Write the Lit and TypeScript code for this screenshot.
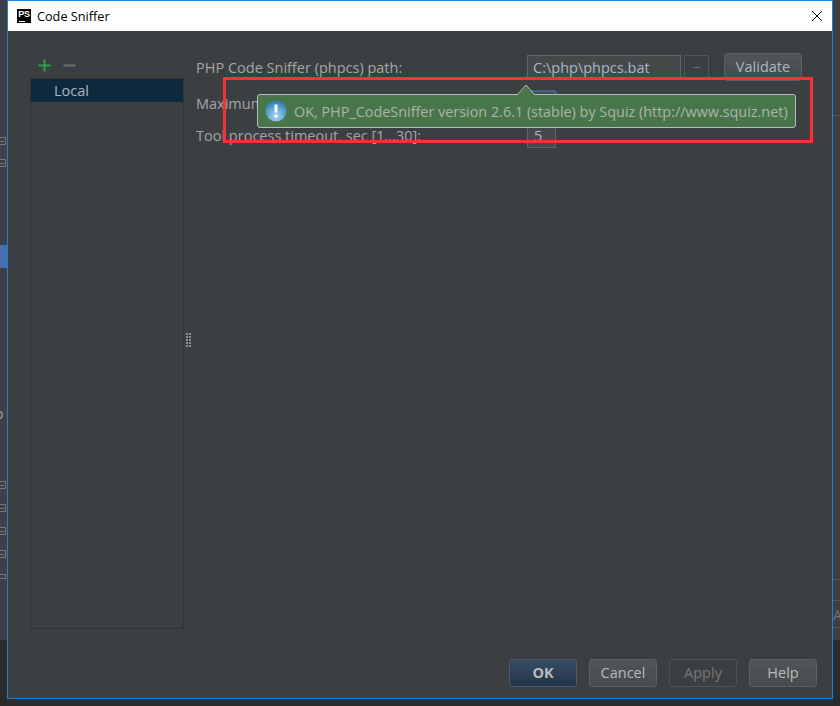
import { LitElement, html, css } from 'lit';
import { customElement } from 'lit/decorators.js';

// little file glyphs of the IDE project tree, showing behind the dialog
const TREE_ICONS = [
  { top: 137, cls: '' },
  { top: 159, cls: '' },
  { top: 481, cls: '' },
  { top: 504, cls: '' },
  { top: 527, cls: '' },
  { top: 550, cls: '' },
  { top: 574, cls: 'cut' },
];

@customElement('app-root')
export class AppRoot extends LitElement {
  static styles = css`
    :host {
      display: block;
      width: 840px;
      height: 706px;
      position: relative;
      overflow: hidden;
      background: #3c3f41;
      font-family: 'Open Sans', 'Noto Sans', sans-serif;
      font-size: 14.5px;
      color: #a9b7c6;
    }
    .ide-bottom {
      position: absolute;
      left: 0;
      right: 0;
      top: 640px;
      bottom: 0;
      background: #2b2b2b;
    }
    .ide-left-edge {
      position: absolute;
      left: 0;
      top: 0;
      width: 7px;
      height: 640px;
      background: #3d4044;
    }
    .ide-sel {
      position: absolute;
      left: 0;
      top: 245px;
      width: 7px;
      height: 23px;
      background: #4b6eaf;
    }
    .ide-letter {
      position: absolute;
      left: -5px;
      top: 404px;
      width: 12px;
      overflow: hidden;
      color: #a9a9a9;
      font-size: 14px;
      line-height: 20px;
    }
    .tree-icon {
      position: absolute;
      left: 0;
      width: 6px;
      height: 8px;
      border: 1px solid #75787a;
      border-left: 0;
      box-sizing: border-box;
    }
    .tree-icon::after {
      content: '';
      position: absolute;
      left: 0;
      right: 1px;
      top: 3px;
      height: 1px;
      background: #75787a;
    }
    .tree-icon.cut {
      height: 5px;
    }
    .ide-right {
      position: absolute;
      left: 833px;
      top: 0;
      width: 7px;
      height: 640px;
      background: #3c3f41;
    }
    .ide-right-line {
      position: absolute;
      left: 833px;
      width: 7px;
      height: 1px;
      background: #515658;
    }
    .ide-right-text {
      position: absolute;
      left: 833px;
      top: 605px;
      width: 7px;
      overflow: hidden;
      color: #6f7375;
      font-size: 14px;
      line-height: 20px;
    }
    .dialog {
      position: absolute;
      left: 7px;
      top: 0;
      width: 826px;
      height: 699px;
      box-sizing: border-box;
      border: 1px solid #1883d7;
      background: #3c3f41;
      display: flex;
      flex-direction: column;
    }
    .titlebar {
      height: 30px;
      flex: none;
      background: #fff;
      display: flex;
      align-items: center;
      padding: 0 7px 0 9px;
      color: #000;
      font-size: 12.7px;
    }
    .ps-logo {
      width: 14px;
      height: 14px;
      background: #000;
      margin-right: 6px;
      position: relative;
      flex: none;
      color: #fff;
      font: bold 9px/10px 'Liberation Sans', sans-serif;
      text-align: center;
      letter-spacing: -0.3px;
    }
    .ps-logo::after {
      content: '';
      position: absolute;
      left: 2px;
      bottom: 1px;
      width: 6px;
      height: 1px;
      background: #fff;
    }
    .title {
      flex: 1;
    }
    .close {
      width: 12px;
      height: 12px;
      display: block;
      margin-right: 2px;
    }
    .body {
      flex: 1;
      display: flex;
      padding: 22px 30px 0 22px;
      min-height: 0;
    }
    .left {
      width: 154px;
      flex: none;
      display: flex;
      flex-direction: column;
    }
    .toolbar {
      height: 25px;
      display: flex;
      align-items: center;
      gap: 12px;
      padding: 0 0 1px 8px;
      box-sizing: border-box;
      flex: none;
    }
    .toolbar svg {
      width: 13px;
      height: 13px;
      display: block;
    }
    .list {
      height: 551px;
      box-sizing: border-box;
      border: 1px solid #323232;
    }
    .item {
      height: 23px;
      line-height: 23px;
      padding-left: 23px;
      background: #0d293e;
      color: #a9b7c6;
    }
    .splitter {
      width: 12px;
      flex: none;
      display: flex;
      align-items: center;
      padding-left: 2px;
      box-sizing: border-box;
    }
    .grip {
      width: 6px;
      height: 15px;
      margin-top: -32px;
      background-image: radial-gradient(circle at 1px 1px, #8f9294 1px, transparent 1px);
      background-size: 3px 3px;
    }
    .form {
      flex: 1;
      min-width: 0;
      display: flex;
      flex-direction: column;
    }
    .row {
      display: grid;
      grid-template-columns: 331px auto;
      align-items: center;
      color: #a6a6a6;
      white-space: nowrap;
    }
    .row.path {
      height: 28px;
    }
    .row.lines {
      height: 26px;
      margin-top: 9px;
    }
    .row.timeout {
      height: 26px;
      margin-top: 6px;
    }
    .path-fields {
      display: flex;
      align-items: center;
    }
    .input {
      box-sizing: border-box;
      height: 25px;
      border: 1px solid #646464;
      background: #45494a;
      color: #a9b7c6;
      line-height: 23px;
      padding-left: 5px;
    }
    .input.wide {
      width: 154px;
    }
    .input.small {
      width: 29px;
      padding-left: 6px;
    }
    .input.focus {
      border: 1px solid #466d94;
      border-radius: 2px;
      box-shadow: 0 0 0 1px #3d6185;
    }
    .dots {
      box-sizing: border-box;
      width: 25px;
      height: 25px;
      margin-left: 3px;
      border: 1px solid #555;
      text-align: center;
      font-size: 9px;
      line-height: 18px;
      color: #bbb;
    }
    .btn {
      box-sizing: border-box;
      height: 28px;
      border: 1px solid #5e6060;
      border-radius: 3px;
      background: linear-gradient(#505557, #464a4c);
      color: #a9b7c6;
      text-align: center;
      line-height: 26px;
    }
    .validate {
      width: 78px;
      margin-left: 15px;
    }
    .footer {
      flex: none;
      height: 39px;
      display: flex;
      justify-content: flex-end;
      gap: 12px;
      padding-right: 15px;
    }
    .footer .btn {
      width: 68px;
      color: #bbb;
    }
    .footer .ok {
      background: linear-gradient(#384c67, #233448);
      border-color: #4c5a6a;
      font-weight: 700;
      color: #bbb;
    }
    .footer .off {
      background: none;
      border-color: #505254;
      color: #777;
    }
    .balloon {
      position: absolute;
      left: 257px;
      top: 94px;
      box-sizing: border-box;
      width: 539px;
      height: 34px;
      background: #49754a;
      border: 1px solid #b4bfb4;
      border-radius: 3px;
      display: flex;
      align-items: center;
      padding-left: 7px;
      gap: 7px;
      font-size: 14.4px;
      color: #a9b7a9;
      white-space: nowrap;
    }
    .balloon svg {
      width: 22px;
      height: 22px;
      flex: none;
      display: block;
    }
    .tip {
      position: absolute;
      left: 517px;
      top: 84px;
      width: 18px;
      height: 11px;
      display: block;
    }
    .mark {
      position: absolute;
      left: 223px;
      top: 77px;
      width: 590px;
      height: 66px;
      box-sizing: border-box;
      border: 3px solid #f83232;
    }
  `;

  render() {
    return html`
      <div class="ide-left-edge"></div>
      <div class="ide-sel"></div>
      <div class="ide-letter">o</div>
      ${TREE_ICONS.map(
        (i) => html`<div class="tree-icon ${i.cls}" style="top:${i.top}px"></div>`
      )}
      <div class="ide-bottom"></div>
      <div class="ide-right"></div>
      <div class="ide-right-line" style="top:115px"></div>
      <div class="ide-right-line" style="top:579px"></div>
      <div class="ide-right-line" style="top:600px"></div>
      <div class="ide-right-line" style="top:627px"></div>
      <div class="ide-right-text">Ap</div>

      <div class="dialog">
        <div class="titlebar">
          <div class="ps-logo">PS</div>
          <div class="title">Code Sniffer</div>
          <svg class="close" viewBox="0 0 12 12">
            <path d="M1 1l10 10M11 1L1 11" stroke="#000" stroke-width="1" fill="none" />
          </svg>
        </div>
        <div class="body">
          <div class="left">
            <div class="toolbar">
              <svg viewBox="0 0 13 13">
                <path d="M6.5 0.5v12M0.5 6.5h12" stroke="#2ea14a" stroke-width="2" fill="none" />
              </svg>
              <svg viewBox="0 0 13 13">
                <path d="M0.5 6.5h12" stroke="#6e7173" stroke-width="2" fill="none" />
              </svg>
            </div>
            <div class="list"><div class="item">Local</div></div>
          </div>
          <div class="splitter"><div class="grip"></div></div>
          <div class="form">
            <div class="row path">
              <span>PHP Code Sniffer (phpcs) path:</span>
              <div class="path-fields">
                <div class="input wide">C:\\php\\phpcs.bat</div>
                <div class="dots">...</div>
                <div class="btn validate">Validate</div>
              </div>
            </div>
            <div class="row lines">
              <span>Maximum</span>
              <div class="input small focus"></div>
            </div>
            <div class="row timeout">
              <span>Tool process timeout, sec [1...30]:</span>
              <div class="input small">5</div>
            </div>
          </div>
        </div>
        <div class="footer">
          <div class="btn ok">OK</div>
          <div class="btn">Cancel</div>
          <div class="btn off">Apply</div>
          <div class="btn">Help</div>
        </div>
      </div>

      <div class="balloon">
        <svg viewBox="0 0 22 22">
          <defs>
            <radialGradient id="orb" cx="50%" cy="75%" r="70%">
              <stop offset="0" stop-color="#a9d8f2" />
              <stop offset="1" stop-color="#2f7fb9" />
            </radialGradient>
          </defs>
          <circle cx="11" cy="11" r="10.5" fill="url(#orb)" />
          <path d="M11 4.5v8" stroke="#fff" stroke-width="3" fill="none" />
          <circle cx="11" cy="16" r="1.7" fill="#fff" />
        </svg>
        <span>OK, PHP_CodeSniffer version 2.6.1 (stable) by Squiz (http://www.squiz.net)</span>
      </div>
      <svg class="tip" viewBox="0 0 18 11">
        <path d="M0 11L9 1l9 10z" fill="#49754a" />
        <path d="M0 11L9 1l9 10" fill="none" stroke="#b4bfb4" />
      </svg>
      <div class="mark"></div>
    `;
  }
}
